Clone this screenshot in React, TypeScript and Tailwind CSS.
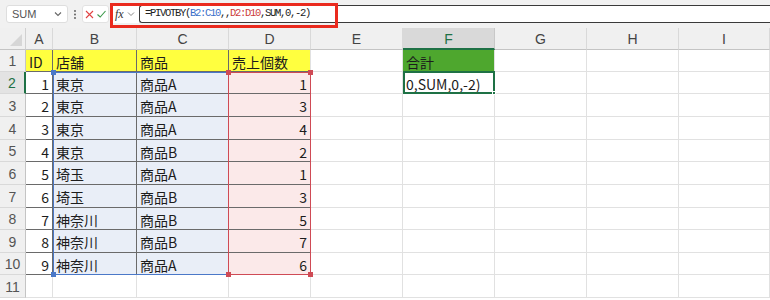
import React from "react";

const LETTERS = ["A", "B", "C", "D", "E", "F", "G", "H", "I"];
const ROWS: (string | number)[][] = [
  [1, "東京", "商品A", 1],
  [2, "東京", "商品A", 3],
  [3, "東京", "商品A", 4],
  [4, "東京", "商品B", 2],
  [5, "埼玉", "商品A", 1],
  [6, "埼玉", "商品B", 3],
  [7, "神奈川", "商品B", 5],
  [8, "神奈川", "商品B", 7],
  [9, "神奈川", "商品A", 6],
];

const cellFont = "font-['Noto_Sans_CJK_JP','Noto_Sans',sans-serif] text-[14px] text-[#1c1c1c] leading-none";
const GRID =
  "grid grid-cols-[26px_27px_84px_92px_82px_92px_92px_92px_92px_91px] grid-rows-[22px_22px_22px_23px_23px_22px_23px_23px_22px_23px_22px_23px_24px]";

function Cell({ r, c }: { r: number; c: number }) {
  const inTable = r >= 1 && r <= 10 && c >= 1 && c <= 4;
  let cls = "flex items-center overflow-visible whitespace-nowrap border-r border-b ";
  let content: React.ReactNode = null;
  let right = false;
  if (inTable) {
    if (r === 1) cls += "bg-[#ffff3f] ";
    else if (c === 2 || c === 3) cls += "bg-[#e9eef7] ";
    else if (c === 4) cls += "bg-[#fbe9e9] ";
    else cls += "bg-white ";
    if (c === 4) cls += "border-r-[#e1e1e1] ";
    else cls += "border-r-[#6a6a6a] ";
    cls += "border-b-[#6a6a6a] ";
    if (r === 1) {
      content = ["ID", "店舗", "商品", "売上個数"][c - 1];
    } else {
      const v = ROWS[r - 2][c - 1];
      content = v;
      right = c === 1 || c === 4;
    }
  } else {
    cls += "bg-white border-[#e1e1e1] ";
    if (r === 1 && c === 6) {
      cls = "flex items-center whitespace-nowrap border-r border-b bg-[#4ea72e] border-[#e1e1e1] ";
      content = "合計";
    }
    if (r === 2 && c === 6) {
      content = "0,SUM,0,-2)";
    }
  }
  cls += right ? "justify-end pr-[3px] " : "justify-start pl-[3px] ";
  return (
    <div className={cls + cellFont}>
      <span className="pt-[2px]">{content}</span>
    </div>
  );
}

function Corner() {
  return (
    <div className="relative border-r border-b border-r-[#d0d0d0] border-b-[#c4c4c4] bg-[#f0f0f0]">
      <svg className="absolute right-[3px] bottom-[3px]" width="12" height="12" viewBox="0 0 12 12">
        <polygon points="12,0 12,12 0,12" fill="#d6d6d6" />
      </svg>
    </div>
  );
}

function ColHeader({ l }: { l: string }) {
  const sel = l === "F";
  return (
    <div
      className={
        "flex items-center justify-center border-r font-['Liberation_Sans',Arial,sans-serif] text-[14px] pt-[2px] " +
        (sel
          ? "bg-[#d9d9d9] text-[#1e7145] border-r-[#c8c8c8] border-b-2 border-b-[#1e7145]"
          : "bg-[#f0f0f0] text-[#444] border-r-[#d9d9d9] border-b border-b-[#c4c4c4]")
      }
    >
      {l}
    </div>
  );
}

function RowHeader({ r }: { r: number }) {
  const sel = r === 2;
  return (
    <div
      className={
        "flex items-center justify-center border-b font-['Liberation_Sans',Arial,sans-serif] text-[14px] pt-[2px] " +
        (sel
          ? "bg-[#e3e3e3] text-[#1e7145] border-r-2 border-r-[#1e7145] border-b-[#d9d9d9]"
          : "bg-[#f0f0f0] text-[#555] border-r border-r-[#c4c4c4] border-b-[#d9d9d9]")
      }
    >
      {r}
    </div>
  );
}

function Sq({ cls }: { cls: string }) {
  return <div className={"absolute h-[5px] w-[5px] " + cls} />;
}

export default function App() {
  const excelRows = Array.from({ length: 11 }, (_, i) => i + 1);
  return (
    <div className="h-[300px] w-[770px] overflow-hidden bg-white">
      {/* formula bar */}
      <div className="relative flex h-[28px] items-start bg-[#f1f1f1]">
        <div className="ml-[6px] mt-[5px] flex h-[18px] w-[62px] items-center justify-between rounded-[3px] border border-[#dedede] bg-white px-[5px]">
          <span className="font-['Liberation_Sans',Arial,sans-serif] text-[11px] text-[#555]">SUM</span>
          <svg width="8" height="6" viewBox="0 0 8 6">
            <path d="M1 1.5 L4 4.5 L7 1.5" fill="none" stroke="#666" strokeWidth="1.1" />
          </svg>
        </div>
        <div className="mt-[5px] flex h-[18px] w-[14px] items-center justify-center">
          <svg width="2" height="9" viewBox="0 0 2 9">
            <circle cx="1" cy="1" r="0.9" fill="#555" />
            <circle cx="1" cy="4.5" r="0.9" fill="#555" />
            <circle cx="1" cy="8" r="0.9" fill="#555" />
          </svg>
        </div>
        <div className="mt-[5px] flex h-[18px] w-[27px] items-center justify-center gap-[3px] rounded-[3px] border border-[#e2e2e2] bg-white">
          <svg width="9" height="9" viewBox="0 0 9 9">
            <path d="M1 1 L8 8 M8 1 L1 8" stroke="#e04343" strokeWidth="1.1" />
          </svg>
          <svg width="9" height="8" viewBox="0 0 9 8">
            <path d="M0.5 4.5 L3.2 7 L8.5 1" fill="none" stroke="#3c9a4a" strokeWidth="1.1" />
          </svg>
        </div>
        <div className="ml-[1px] mt-[5px] flex h-[18px] w-[29px] items-center gap-[3px] bg-white pl-[5px]">
          <span className="font-['Liberation_Serif',serif] text-[12px] italic leading-none text-[#333]">fx</span>
          <svg width="8" height="6" viewBox="0 0 8 6">
            <path d="M1 1.5 L4 4.5 L7 1.5" fill="none" stroke="#888" strokeWidth="1" />
          </svg>
        </div>
        <div className="mt-[5px] flex h-[18px] flex-1 items-center rounded-l-[3px] border-y border-l border-[#3a3a3a] bg-white pl-[5px]">
          <span className="font-['Liberation_Mono',monospace] text-[10.5px] tracking-[-1.3px] text-[#222]">
            =PIVOTBY(<span className="text-[#3a6fc9]">B2:C10</span>,,<span className="text-[#cc3b3b]">D2:D10</span>,SUM,0,-2)
          </span>
        </div>
        <div className="pointer-events-none absolute left-[110px] top-[3px] h-[25px] w-[228px] border-[3px] border-[#ea2a1e]" />
      </div>

      {/* sheet grid */}
      <div className="relative">
        <div className={GRID}>
          <Corner />
          {LETTERS.map((l) => (
            <ColHeader key={l} l={l} />
          ))}
          {excelRows.map((r) => (
            <React.Fragment key={r}>
              <RowHeader r={r} />
              {LETTERS.map((_, ci) => (
                <Cell key={ci} r={r} c={ci + 1} />
              ))}
            </React.Fragment>
          ))}
        </div>

        {/* overlay layer: range highlights and active cell */}
        <div className={"pointer-events-none absolute inset-0 " + GRID}>
          <div className="relative col-start-3 col-end-5 row-start-3 row-end-12 border border-[#4a78c8]">
            <Sq cls="-left-[3px] -top-[3px] bg-[#4a78c8]" />
            <Sq cls="-left-[3px] -bottom-[3px] bg-[#4a78c8]" />
          </div>
          <div className="relative col-start-5 col-end-6 row-start-3 row-end-12 -ml-px border-[1.5px] border-[#cf4a55]">
            <Sq cls="-left-[3px] -top-[3px] bg-[#cf4a55]" />
            <Sq cls="-right-[3px] -top-[3px] bg-[#cf4a55]" />
            <Sq cls="-left-[3px] -bottom-[3px] bg-[#cf4a55]" />
            <Sq cls="-right-[3px] -bottom-[3px] bg-[#cf4a55]" />
          </div>
          <div className="relative col-start-7 col-end-8 row-start-3 row-end-4 -mt-px border-2 border-[#1e7145]">
            <div className="absolute -bottom-[3px] -right-[3px] h-[4px] w-[4px] border border-white bg-[#1e7145]" />
          </div>
        </div>
      </div>
    </div>
  );
}
